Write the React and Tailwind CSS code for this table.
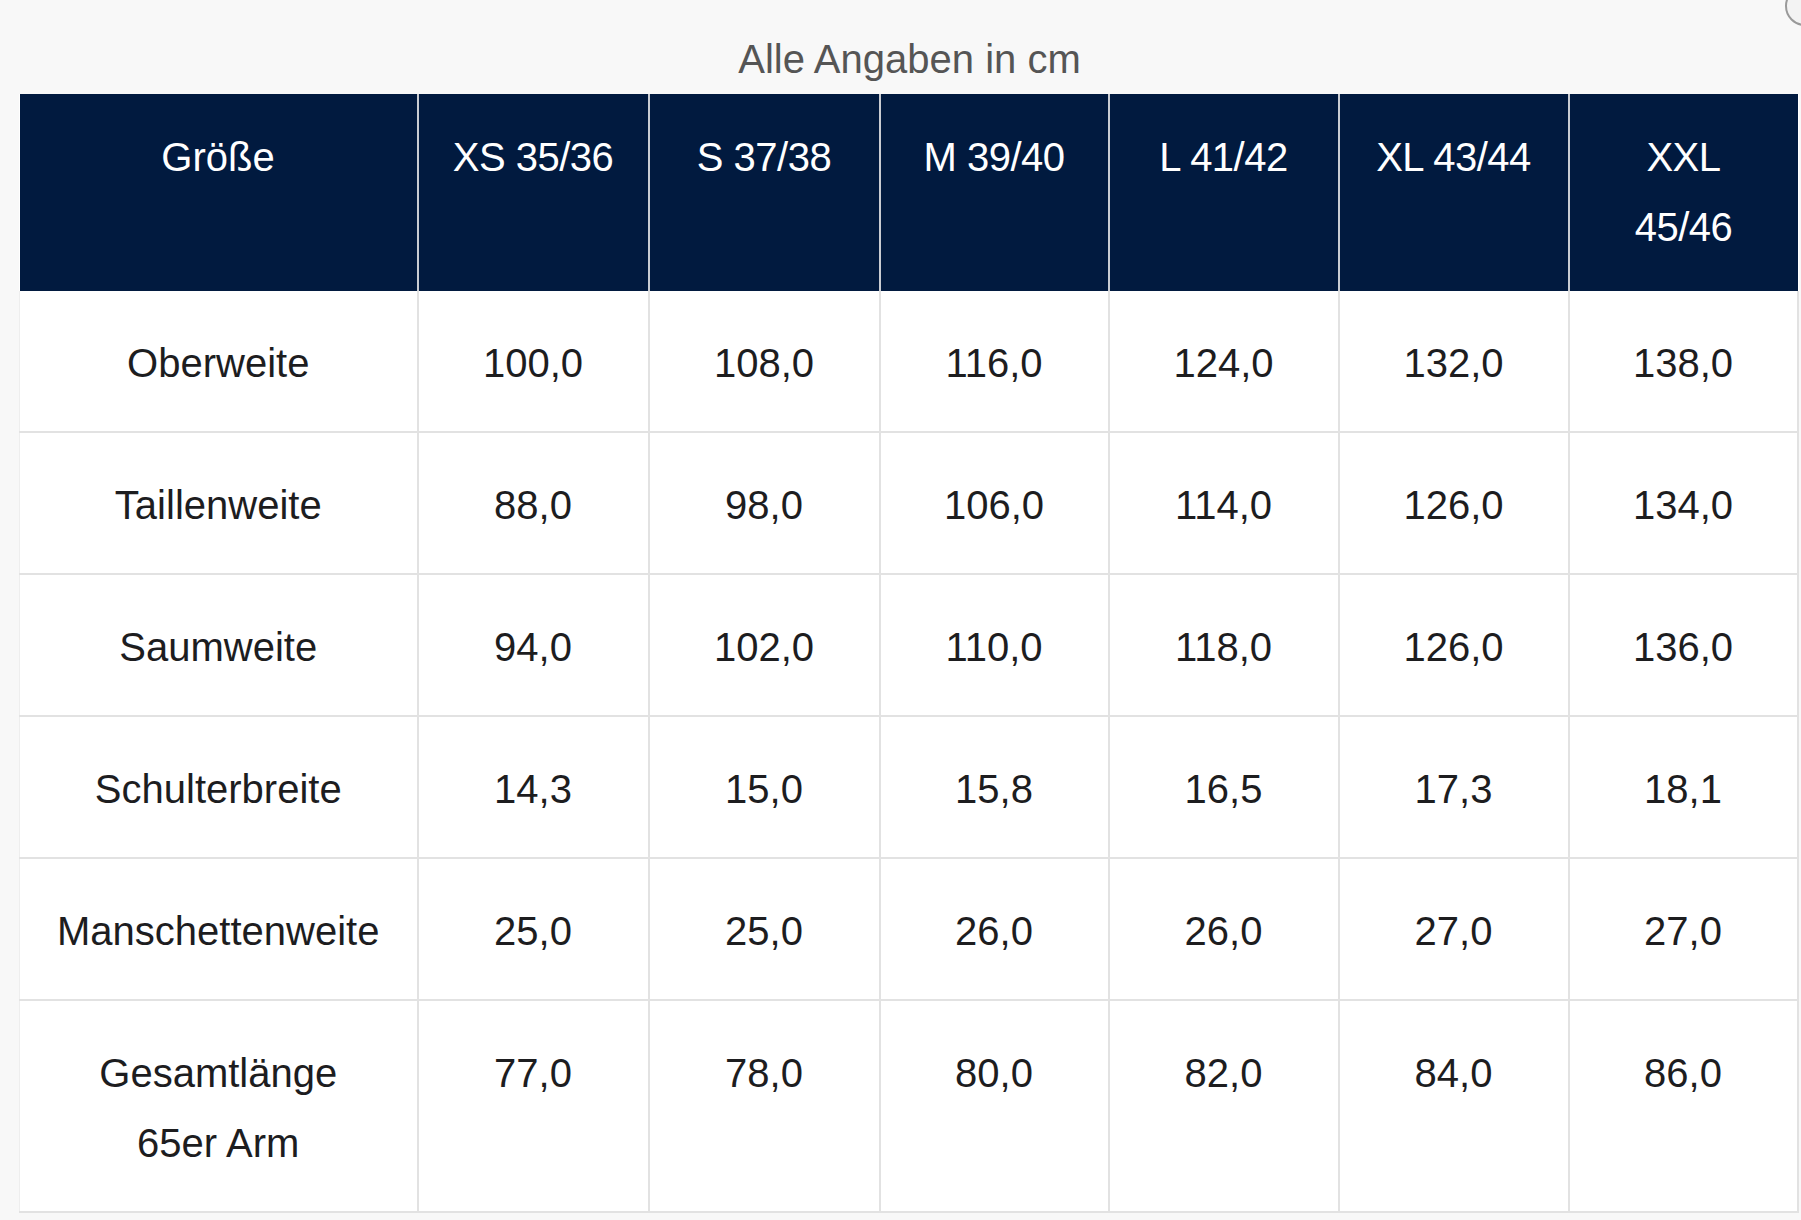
import React from 'react';

const sizes = ['XS 35/36', 'S 37/38', 'M 39/40', 'L 41/42', 'XL 43/44', ['XXL', '45/46']];

const rows = [
  { label: 'Oberweite', values: ['100,0', '108,0', '116,0', '124,0', '132,0', '138,0'] },
  { label: 'Taillenweite', values: ['88,0', '98,0', '106,0', '114,0', '126,0', '134,0'] },
  { label: 'Saumweite', values: ['94,0', '102,0', '110,0', '118,0', '126,0', '136,0'] },
  { label: 'Schulterbreite', values: ['14,3', '15,0', '15,8', '16,5', '17,3', '18,1'] },
  { label: 'Manschettenweite', values: ['25,0', '25,0', '26,0', '26,0', '27,0', '27,0'] },
  { label: ['Gesamtlänge', '65er Arm'], values: ['77,0', '78,0', '80,0', '82,0', '84,0', '86,0'] },
];

function Lines({ text }) {
  if (Array.isArray(text)) {
    return text.map((t, i) => <div key={i}>{t}</div>);
  }
  return text;
}

export default function App() {
  return (
    <div
      className="relative w-[1801px] h-[1220px] overflow-hidden bg-[#f8f8f8] pt-[35px]"
      style={{ fontFamily: '"Liberation Sans", Arial, sans-serif' }}
    >
      {/* close button peeking in from the corner */}
      <div className="absolute -top-[14px] -right-[24px] w-[40px] h-[40px] rounded-full border-2 border-[#9a9a9a] bg-[#f3f3f3]" />

      <div className="h-[48px] leading-[48px] text-[40px] text-center text-[#555] mb-[11px] pl-[18px]">
        Alle Angaben in cm
      </div>

      <div className="pl-[19px]">
        <table className="w-[1778px] border-collapse table-fixed bg-white text-[40px] leading-[70px] text-center">
          <colgroup>
            <col className="w-[398px]" />
            <col className="w-[231px]" />
            <col className="w-[231px]" />
            <col className="w-[229px]" />
            <col className="w-[230px]" />
            <col className="w-[230px]" />
            <col className="w-[229px]" />
          </colgroup>
          <thead>
            <tr className="bg-[#011a3f] text-white">
              <th className="font-normal align-top pt-[28px] pb-[28px] h-[197px] border-r-2 border-[#c9ccd2]">Größe</th>
              {sizes.map((s, i) => (
                <th
                  key={i}
                  className={
                    i === sizes.length - 1
                      ? 'font-normal align-top pt-[28px] pb-[28px] h-[197px] tracking-[-0.5px]'
                      : 'font-normal align-top pt-[28px] pb-[28px] h-[197px] border-r-2 border-[#c9ccd2] tracking-[-0.5px]'
                  }
                >
                  <Lines text={s} />
                </th>
              ))}
            </tr>
          </thead>
          <tbody className="text-[#1d1d1f]">
            {rows.map((row, r) => (
              <tr key={r} className="border-b-2 border-[#e2e2e2]">
                <td className="align-top pt-[37px] pb-[33px] border-r-2 border-[#e2e2e2] border-l border-l-[#eeeeee]">
                  <Lines text={row.label} />
                </td>
                {row.values.map((v, i) => (
                  <td
                    key={i}
                    className="align-top pt-[37px] pb-[33px] border-r-2 border-[#e2e2e2]"
                  >
                    {v}
                  </td>
                ))}
              </tr>
            ))}
          </tbody>
        </table>
      </div>
    </div>
  );
}
